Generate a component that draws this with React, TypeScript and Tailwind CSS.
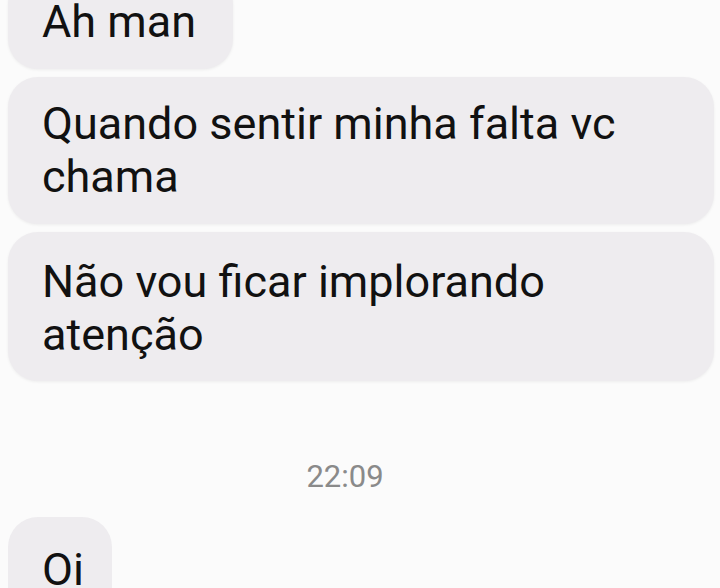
import React from 'react';

const messages = [
    { text: 'Ah man', pad: 'pt-[21px] pb-[21px] pl-[34px] pr-[37px]' },
    { text: 'Quando sentir minha falta vc chama', pad: 'pt-[20px] pb-[21px] pl-[34px] pr-[34px]' },
    { text: 'Não vou ficar implorando atenção', pad: 'pt-[23px] pb-[20px] pl-[34px] pr-[34px]' },
];

const Bubble: React.FC<{ text: string; pad: string }> = ({ text, pad }) => (
    <div
        className={`w-fit max-w-[706px] bg-[#eeecef] rounded-[30px] text-[45px] leading-[53px] text-[#111111] shadow-[0_1px_3px_rgba(0,0,0,0.06)] ${pad}`}
    >
        {text}
    </div>
);

export default function App() {
    return (
        <div className="w-[720px] h-[588px] overflow-hidden bg-[#fbfbfb] font-['Roboto',sans-serif]">
            <div className="flex flex-col gap-[8px] pl-[8px] mt-[-26px]">
                {messages.map((m) => (
                    <Bubble key={m.text} text={m.text} pad={m.pad} />
                ))}
            </div>

            {/* Timestamp */}
            <div className="mt-[78px] pr-[30px] flex justify-center text-[31px] leading-[36px] text-[#8a8a8a]">
                22:09
            </div>

            <div className="mt-[22px] pl-[8px]">
                <div className="w-fit bg-[#eeecef] rounded-[30px] text-[45px] leading-[53px] text-[#111111] pt-[26px] pb-[20px] pl-[34px] pr-[28px]">
                    Oi
                </div>
            </div>
        </div>
    );
}
